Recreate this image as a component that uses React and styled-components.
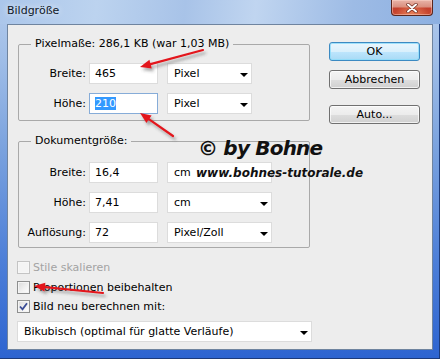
import React from 'react';
import styled, { createGlobalStyle } from 'styled-components';

const GlobalStyle = createGlobalStyle`
  html, body {
    margin: 0;
    padding: 0;
    background: #fff;
  }
  body {
    font-family: "DejaVu Sans", sans-serif;
    font-size: 11px;
    color: #000;
  }
`;

const Window = styled.div`
  position: relative;
  width: 440px;
  height: 359px;
  box-sizing: border-box;
  padding: 0 7px 9px 7px;
  display: flex;
  flex-direction: column;
  background: linear-gradient(180deg, #b2caeb 0px, #9fbde7 60px, #7aa2de 150px, #4d7fd8 260px, #2d64d0 359px);
  box-shadow: inset -1px -1px 0 #1d3b7a;
  overflow: hidden;
`;

const TitleBar = styled.div`
  display: flex;
  align-items: flex-start;
  height: 24px;
  margin: 0 -7px;
  padding: 0 7px;
  background: linear-gradient(96deg, #abc6ea 0%, #bcd3ef 22%, #a8c3e8 42%, #c0d5f0 58%, #9dbbe5 80%, #8db0e1 100%);
`;

const Title = styled.div`
  margin-top: 4px;
  line-height: 14px;
  font-size: 11px;
  color: #101828;
  text-shadow: 0 0 6px rgba(255, 255, 255, 0.9);
`;

const CloseButton = styled.div`
  margin-left: auto;
  width: 42px;
  height: 16px;
  box-sizing: border-box;
  border: 1px solid #5a261c;
  border-top: none;
  border-radius: 0 0 4px 4px;
  display: flex;
  align-items: center;
  justify-content: center;
  background:
    radial-gradient(ellipse at 50% 100%, rgba(255, 170, 120, 0.6) 0%, rgba(255, 170, 120, 0) 60%),
    linear-gradient(180deg, #e9b4a8 0%, #d98f80 45%, #c4402d 55%, #c9492f 100%);
  box-shadow: inset 0 0 0 1px rgba(255, 220, 210, 0.45);
`;

const Client = styled.div`
  position: relative;
  flex: 1;
  display: flex;
  align-items: flex-start;
  padding: 12px 0 0 9px;
  background: #ededed;
  border: 1px solid #6f849f;
`;

const LeftColumn = styled.div`
  display: flex;
  flex-direction: column;
  width: 295px;
`;

const Group = styled.fieldset`
  margin: ${p => p.$mt || 0}px 0 0 1px;
  width: 292px;
  box-sizing: border-box;
  padding: ${p => p.$pt}px 0 ${p => p.$pb}px 0;
  border: 1px solid #a9a9a9;
  border-radius: 2px;
  min-width: 0;
`;

const Legend = styled.legend`
  margin-left: 12px;
  padding: 0 4px;
  line-height: 14px;
  font-size: 11px;
`;

const Row = styled.div`
  display: flex;
  align-items: center;
  height: 21px;

  & + & {
    margin-top: 9px;
  }
`;

const Label = styled.div`
  width: 67px;
  text-align: right;
  line-height: 14px;
`;

const Field = styled.div`
  margin-left: 3px;
  width: 69px;
  height: 21px;
  box-sizing: border-box;
  padding-left: 5px;
  border: 1px solid ${p => (p.$focus ? '#86acd8' : '#dcdcdc')};
  background: #fff;
  line-height: 19px;
  white-space: nowrap;
`;

const Selected = styled.span`
  display: inline-block;
  line-height: 13px;
  background: #3399ff;
  color: #fff;
`;

const Select = styled.div`
  position: relative;
  margin-left: ${p => p.$ml || 0}px;
  width: ${p => p.$w}px;
  height: 21px;
  box-sizing: border-box;
  padding-left: 6px;
  border: 1px solid #dcdcdc;
  background: #fff;
  line-height: 19px;
  white-space: nowrap;

  &::after {
    content: '';
    display: ${p => (p.$noArrow ? 'none' : 'block')};
    position: absolute;
    right: 3px;
    top: 9px;
    border-left: 4px solid transparent;
    border-right: 4px solid transparent;
    border-top: 4px solid #000;
  }
`;

const CheckRow = styled.div`
  display: flex;
  align-items: center;
  gap: 3px;
  height: 13px;
  margin-top: ${p => p.$mt}px;
  color: ${p => (p.$disabled ? '#a3a3a3' : '#000')};
  line-height: 13px;
`;

const Box = styled.span`
  width: 13px;
  height: 13px;
  box-sizing: border-box;
  border: 1px solid ${p => (p.$disabled ? '#c4c4c4' : '#8e8f8f')};
  background: ${p =>
    p.$disabled
      ? '#f4f4f4'
      : 'linear-gradient(135deg, #dadada 0%, #f2f2f2 60%, #ffffff 100%)'};
  box-shadow: inset 0 0 0 1px ${p => (p.$disabled ? '#f7f7f7' : '#f4f4f4')};
  display: flex;
  align-items: center;
  justify-content: center;
`;

const ButtonColumn = styled.div`
  display: flex;
  flex-direction: column;
  margin-left: 17px;
  padding-top: 5px;
`;

const Button = styled.div`
  width: 91px;
  height: 19px;
  box-sizing: border-box;
  margin-top: ${p => p.$mt || 0}px;
  border: 1px solid ${p => (p.$primary ? '#3c8ac2' : '#707070')};
  border-radius: 3px;
  text-align: center;
  line-height: 17px;
  background: ${p =>
    p.$primary
      ? 'linear-gradient(180deg, #eaf6fd 0%, #d9f0fc 50%, #bee6fd 50%, #a9daf5 100%)'
      : 'linear-gradient(180deg, #f4f4f4 0%, #ececec 50%, #dedede 50%, #d0d0d0 100%)'};
  box-shadow: inset 0 0 0 1px ${p => (p.$primary ? 'rgba(140, 220, 250, 0.8)' : 'rgba(255, 255, 255, 0.7)')};
`;

const Watermark = styled.div`
  position: absolute;
  left: 196px;
  top: 137px;
  color: #111;
  font-family: "DejaVu Sans", sans-serif;
  font-weight: bold;
  font-style: italic;
  pointer-events: none;
`;

const WatermarkName = styled.div`
  margin-left: 2px;
  font-size: 20px;
  line-height: 22px;
  letter-spacing: -0.8px;
`;

const WatermarkUrl = styled.div`
  margin-top: 7px;
  font-size: 12px;
  line-height: 14px;
`;

const Overlay = styled.svg`
  position: absolute;
  left: 0;
  top: 0;
  pointer-events: none;
`;

const Arrow = ({ tail, tip }) => {
  const dx = tip[0] - tail[0];
  const dy = tip[1] - tail[1];
  const len = Math.hypot(dx, dy);
  const ux = dx / len;
  const uy = dy / len;
  const bx = tip[0] - ux * 11;
  const by = tip[1] - uy * 11;
  const px = -uy * 4.5;
  const py = ux * 4.5;
  return (
    <g filter="url(#shadow)">
      <line x1={tail[0]} y1={tail[1]} x2={bx + ux * 2} y2={by + uy * 2} stroke="#e3171f" strokeWidth="2.2" strokeLinecap="round" />
      <polygon points={`${tip[0]},${tip[1]} ${bx + px},${by + py} ${bx - px},${by - py}`} fill="#e3171f" />
    </g>
  );
};

const CheckMark = () => (
  <svg width="9" height="9" viewBox="0 0 9 9">
    <path d="M1 4.5 L3.5 7.3 L8 1.2" fill="none" stroke="#3b4d96" strokeWidth="1.8" />
  </svg>
);

const App = () => (
  <>
    <GlobalStyle />
    <Window>
      <TitleBar>
        <Title>Bildgröße</Title>
        <CloseButton>
          <svg width="12" height="10" viewBox="0 0 12 10">
            <path d="M2 1.5 L10 8.5 M10 1.5 L2 8.5" stroke="#6b2a1f" strokeWidth="3.4" strokeLinecap="round" />
            <path d="M2 1.5 L10 8.5 M10 1.5 L2 8.5" stroke="#fff" strokeWidth="2" strokeLinecap="round" />
          </svg>
        </CloseButton>
      </TitleBar>
      <Client>
        <LeftColumn>
          <Group $pt={12} $pb={6}>
            <Legend>Pixelmaße: 286,1 KB (war 1,03 MB)</Legend>
            <Row>
              <Label>Breite:</Label>
              <Field>465</Field>
              <Select $ml={9} $w={85}>Pixel</Select>
            </Row>
            <Row>
              <Label>Höhe:</Label>
              <Field $focus>
                <Selected>210</Selected>
              </Field>
              <Select $ml={9} $w={85}>Pixel</Select>
            </Row>
          </Group>

          <Group $mt={13} $pt={14} $pb={4}>
            <Legend>Dokumentgröße:</Legend>
            <Row>
              <Label>Breite:</Label>
              <Field>16,4</Field>
              <Select $ml={9} $w={105} $noArrow>cm</Select>
            </Row>
            <Row>
              <Label>Höhe:</Label>
              <Field>7,41</Field>
              <Select $ml={9} $w={105}>cm</Select>
            </Row>
            <Row>
              <Label>Auflösung:</Label>
              <Field>72</Field>
              <Select $ml={9} $w={105}>Pixel/Zoll</Select>
            </Row>
          </Group>

          <CheckRow $mt={13} $disabled>
            <Box $disabled />
            Stile skalieren
          </CheckRow>
          <CheckRow $mt={7}>
            <Box />
            Proportionen beibehalten
          </CheckRow>
          <CheckRow $mt={6}>
            <Box>
              <CheckMark />
            </Box>
            Bild neu berechnen mit:
          </CheckRow>

          <Select $w={295} style={{ marginTop: 8 }}>Bikubisch (optimal für glatte Verläufe)</Select>
        </LeftColumn>

        <ButtonColumn>
          <Button $primary>OK</Button>
          <Button $mt={9}>Abbrechen</Button>
          <Button $mt={16}>Auto...</Button>
        </ButtonColumn>
      </Client>

      <Watermark>
        <WatermarkName>© by Bohne</WatermarkName>
        <WatermarkUrl>www.bohnes-tutorale.de</WatermarkUrl>
      </Watermark>

      <Overlay width="440" height="359">
        <defs>
          <filter id="shadow" x="-20%" y="-50%" width="140%" height="200%">
            <feDropShadow dx="2" dy="3" stdDeviation="1.5" floodColor="#444" floodOpacity="0.45" />
          </filter>
        </defs>
        <Arrow tail={[203, 50]} tip={[140, 67]} />
        <Arrow tail={[173, 136]} tip={[140, 113]} />
        <Arrow tail={[103, 293]} tip={[34, 286]} />
      </Overlay>
    </Window>
  </>
);

export default App;
